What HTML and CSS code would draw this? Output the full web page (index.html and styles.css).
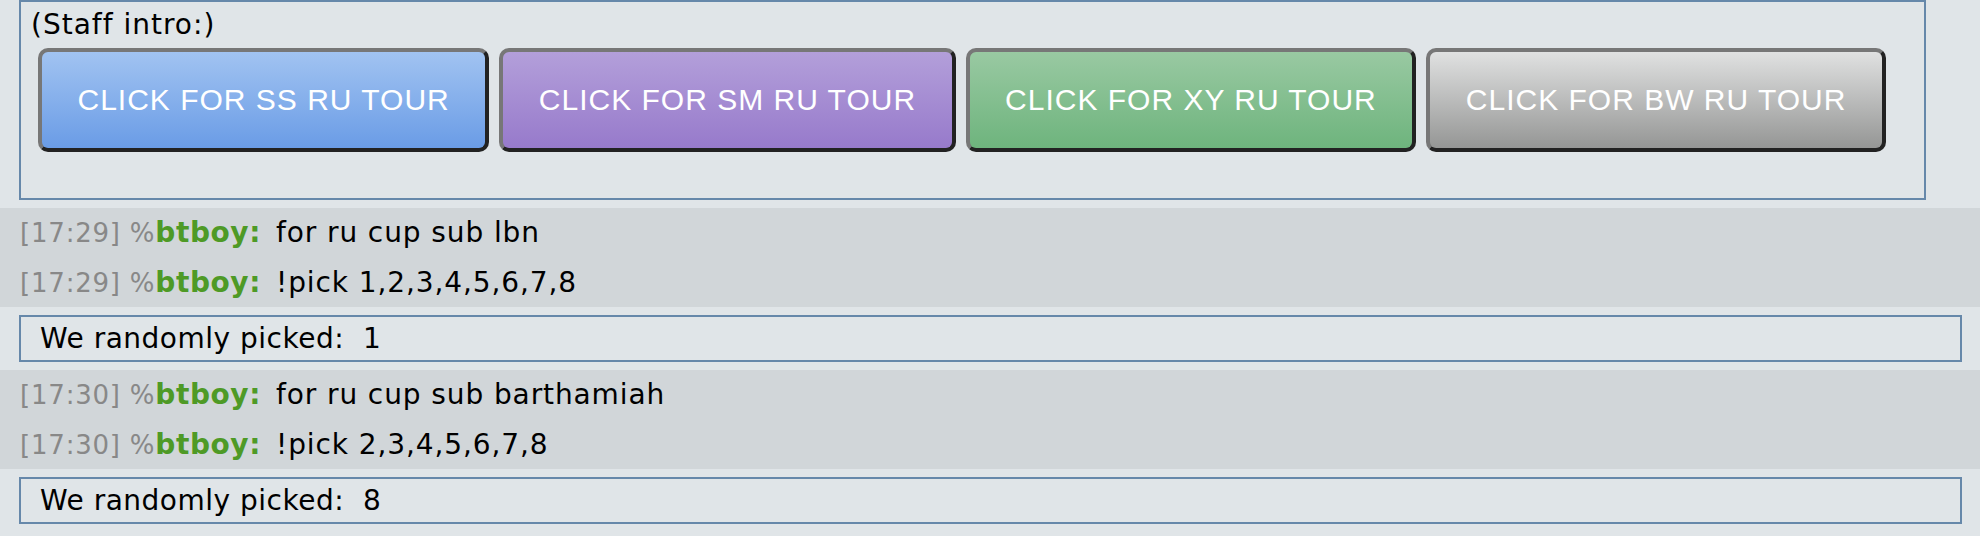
FILE: index.html
```html
<!DOCTYPE html>
<html>
<head>
<meta charset="utf-8">
<link rel="stylesheet" href="styles.css">
</head>
<body>
<div class="log">
  <div class="staff">
    <div class="staff-title">(Staff intro:)</div>
    <div class="buttons">
      <button class="btn btn-ss">CLICK FOR SS RU TOUR</button>
      <button class="btn btn-sm">CLICK FOR SM RU TOUR</button>
      <button class="btn btn-xy">CLICK FOR XY RU TOUR</button>
      <button class="btn btn-bw">CLICK FOR BW RU TOUR</button>
    </div>
  </div>

  <div class="group">
    <div class="chat"><span class="time">[17:29]</span> <span class="rank">%</span><strong class="user">btboy:</strong><span class="msg">for ru cup sub lbn</span></div>
    <div class="chat"><span class="time">[17:29]</span> <span class="rank">%</span><strong class="user">btboy:</strong><span class="msg">!pick 1,2,3,4,5,6,7,8</span></div>
  </div>
  <div class="infobox">We randomly picked:&nbsp; 1</div>

  <div class="group">
    <div class="chat"><span class="time">[17:30]</span> <span class="rank">%</span><strong class="user">btboy:</strong><span class="msg">for ru cup sub barthamiah</span></div>
    <div class="chat"><span class="time">[17:30]</span> <span class="rank">%</span><strong class="user">btboy:</strong><span class="msg">!pick 2,3,4,5,6,7,8</span></div>
  </div>
  <div class="infobox">We randomly picked:&nbsp; 8</div>
</div>
</body>
</html>
```

FILE: styles.css
```css
html, body {
  margin: 0;
  padding: 0;
}

body {
  background: #e0e5e8;
  font-family: "DejaVu Sans", Verdana, sans-serif;
  color: #000;
  width: 1980px;
  height: 536px;
  overflow: hidden;
}

.log {
  display: flex;
  flex-direction: column;
}

.staff {
  box-sizing: border-box;
  height: 200px;
  margin: 0 54px 0 19px;
  border: 2px solid #6688aa;
  padding: 7px 10px 0 10px;
}

.staff-title {
  font-size: 28px;
  line-height: 32px;
  letter-spacing: 1px;
}

.buttons {
  display: flex;
  gap: 10px;
  margin-top: 7px;
  margin-left: 7px;
}

.btn {
  box-sizing: border-box;
  height: 104px;
  padding: 0 35.5px;
  border: 4px solid;
  border-color: #777 #222 #222 #777;
  border-radius: 10px;
  font-family: "Liberation Sans", Arial, sans-serif;
  font-size: 30px;
  color: #fff;
  text-align: center;
  letter-spacing: 1px;
  white-space: nowrap;
}

.btn-ss {
  background: linear-gradient(to bottom, #a1c3f1, #6a9ce6);
}

.btn-sm {
  background: linear-gradient(to bottom, #b39fda, #977acb);
}

.btn-xy {
  background: linear-gradient(to bottom, #99c9a2, #6eb47d);
}

.btn-bw {
  background: linear-gradient(to bottom, #e0e1e1, #959695);
}

.group {
  margin-top: 8px;
  background: #d1d6d9;
}

.chat {
  height: 49.5px;
  line-height: 49.5px;
  padding-left: 20px;
  font-size: 28px;
  white-space: nowrap;
}

.time,
.rank {
  font-size: 26px;
  color: #888;
  letter-spacing: 0.8px;
}

.user {
  color: #4e9a26;
  letter-spacing: 0.6px;
}

.msg {
  margin-left: 15px;
  letter-spacing: 0.9px;
}

.infobox {
  box-sizing: border-box;
  height: 47px;
  margin: 8px 18px 0 19px;
  border: 2px solid #6688aa;
  padding-left: 19px;
  font-size: 28px;
  line-height: 43px;
  letter-spacing: 0.5px;
}
```
